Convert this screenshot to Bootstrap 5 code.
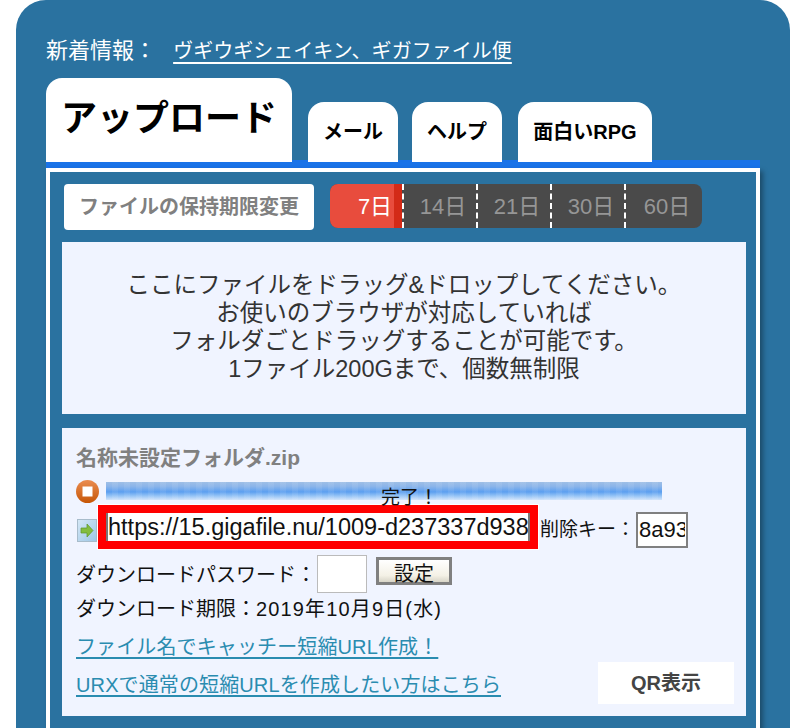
<!doctype html>
<html lang="ja"><head><meta charset="utf-8"><title>GigaFile</title>
<link href="https://cdn.jsdelivr.net/npm/bootstrap@5.3.0/dist/css/bootstrap.min.css" rel="stylesheet">
<style>
html,body{height:728px;overflow:hidden;background:#fff}
body{font-family:"Liberation Sans","Noto Sans CJK JP",sans-serif;color:#222}
.gf-panel{margin:0 14px 0 16px;background:#2a72a0;border-radius:30px 30px 0 0;padding:36px 30px 0;height:728px;overflow:hidden}
.gf-news{height:42px;color:#fff;font-size:22px;line-height:30px;white-space:nowrap}
.gf-news a{color:#fff;font-size:20px;margin-left:11px;letter-spacing:.03px;text-underline-offset:4px}
.gf-tabs{height:84px;gap:16px;position:relative;z-index:1;margin-bottom:-2px}
.gf-tab{background:#fff;color:#000;font-weight:700;border-radius:16px 16px 0 0;display:flex;align-items:center;justify-content:center;height:60px;font-size:20px;padding-bottom:1px}
.gf-tab-main{width:246px;height:84px;font-size:36px;padding-bottom:3px}
.gf-w90{width:90px}.gf-w134{width:134px}.gf-w90b{margin-left:-2px}
.gf-bar{height:8px;background:#1a73e8;width:714px}
.gf-box{width:714px;border:4px solid #fff;border-bottom:0;padding:12px 10px 0 12px;height:640px;box-shadow:3px 3px 5px rgba(0,0,0,.35)}
.gf-periodrow{margin-left:2px;gap:16px;height:58px}
.gf-change{width:250px;height:46px;background:#fff;color:#808080;border-radius:4px;font-weight:700;font-size:20px;display:flex;align-items:center;justify-content:center}
.gf-days{height:44px;width:372px;border-radius:8px;overflow:hidden;background:#4a4a4a;color:#969696;font-size:22px}
.gf-day{width:74px;display:flex;align-items:center;justify-content:center;border-left:2px dashed #fff;padding-left:6px}
.gf-day:last-child{width:78px}
.gf-day-on{width:72px;border-left:0;border-right:8px solid #d32a17;background:#e84c3d;color:#fff;padding-left:26px}
.gf-drop{background:#f0f4ff;height:172px;width:684px;font-size:23.5px;line-height:28px;color:#333;text-align:center;padding-top:29px}
.gf-file{position:relative;margin-top:14px;background:#f0f4ff;width:684px;height:288px;padding:16px 14px 0;color:#111;font-size:20px}
.gf-name{font-size:21px;font-weight:700;color:#808080;line-height:28px;height:36px}
.gf-prog{height:22px;gap:7px;position:relative}
.gf-meter{width:556px;height:18px;margin-top:2px;background:repeating-linear-gradient(90deg,rgba(255,255,255,0) 0 6px,rgba(255,255,255,.07) 6px 12px),linear-gradient(#9fbfe6,#8ab4ea 25%,#5c9ff0 55%,#8fc0f5 75%,#d3e5fb)}
.gf-done{position:absolute;left:305px;top:7px;line-height:22px;font-size:19px}
.gf-urlrow{height:52px;margin-top:1px}
.gf-urlframe{width:440px;height:44px;border:8px solid #f00;outline:1px solid #fff;background:#fff;margin:0 2px 4px 1px;display:flex;flex-shrink:0}
.gf-url{width:100%;border:0;border-left:2px solid #777;border-right:2px solid #777;outline:0;background:#fff;padding:0;font:23.5px/28px "Liberation Sans",sans-serif;color:#111;height:28px}
.gf-keylbl{white-space:nowrap;font-size:19px;margin-top:3px}
.gf-key{width:52px;height:36px;border:2px solid #808080;background:#fff;padding:0 1px;font:22px "Liberation Sans",sans-serif;color:#111;margin:2px 0 0 1px;outline:0;flex-shrink:0}
.gf-icon2{margin:3px 0 0 1px}
.gf-pwrow{height:40px;line-height:40px}
.gf-pw{width:50px;height:38px;border:1px solid #bbb;background:#fff;margin-left:1px;outline:0}
.gf-set{width:76px;height:28px;border:3px solid #808080;margin:2px 0 0 9px;padding:3px 0 0;font-size:20px;line-height:22px;color:#111;background:linear-gradient(#fff,#f4f1e6 70%,#d8d5c8)}
.gf-limit{line-height:28px;height:38px}
.gf-wide{letter-spacing:1.15px}
.gf-links{height:80px}
.gf-links a{color:#2a8cb0;display:block;font-size:20px;letter-spacing:.12px;text-underline-offset:3px}
.gf-l1{line-height:28px;height:38px}
.gf-l2{line-height:28px}
.gf-qr{position:absolute;right:12px;bottom:12px;width:136px;height:42px;background:#fff;color:#444;font-weight:700;font-size:20px;display:flex;align-items:center;justify-content:center}
</style></head><body>
<div class="gf-panel">
  <div class="gf-news">新着情報： <a href="#">ヴギウギシェイキン、ギガファイル便</a></div>
  <div class="gf-tabs d-flex align-items-end">
    <div class="gf-tab gf-tab-main">アップロード</div>
    <div class="gf-tab gf-w90">メール</div>
    <div class="gf-tab gf-w90 gf-w90b">ヘルプ</div>
    <div class="gf-tab gf-w134">面白いRPG</div>
  </div>
  <div class="gf-bar"></div>
  <div class="gf-box">
    <div class="gf-periodrow d-flex">
      <div class="gf-change">ファイルの保持期限変更</div>
      <div class="gf-days d-flex">
        <div class="gf-day gf-day-on">7日</div>
        <div class="gf-day">14日</div><div class="gf-day">21日</div><div class="gf-day">30日</div><div class="gf-day">60日</div>
      </div>
    </div>
    <div class="gf-drop">ここにファイルをドラッグ&amp;ドロップしてください。<br>お使いのブラウザが対応していれば<br>フォルダごとドラッグすることが可能です。<br>1ファイル200Gまで、個数無制限</div>
    <div class="gf-file">
      <div class="gf-name">名称未設定フォルダ.zip</div>
      <div class="gf-prog d-flex">
        <svg width="23" height="23" viewBox="0 0 23 23" class="flex-shrink-0"><defs><linearGradient id="o" x1="0" y1="0" x2="0" y2="1"><stop offset="0" stop-color="#ea8c50"/><stop offset="1" stop-color="#c65606"/></linearGradient></defs><circle cx="11.5" cy="11.5" r="11.5" fill="url(#o)"/><rect x="6.5" y="6.5" width="10" height="10" fill="#fff"/></svg>
        <div class="gf-meter"></div>
        <div class="gf-done">完了！</div>
      </div>
      <div class="gf-urlrow d-flex align-items-center">
        <svg width="20" height="23" viewBox="0 0 20 23" class="flex-shrink-0 gf-icon2"><defs><linearGradient id="b" x1="0" y1="0" x2="1" y2="1"><stop offset="0" stop-color="#d6e8f6"/><stop offset="1" stop-color="#9cc6e6"/></linearGradient></defs><rect x=".5" y=".5" width="19" height="22" fill="url(#b)" stroke="#a8bccb"/><path d="M4 9h6V5l6 6.500-6 6.500v-4H4z" fill="#83bd3e" stroke="#5d9628" stroke-width=".7"/></svg>
        <div class="gf-urlframe"><input class="gf-url" value="https://15.gigafile.nu/1009-d237337d938" readonly aria-label="URL"></div>
        <span class="gf-keylbl">削除キー：</span><input class="gf-key" value="8a93c" readonly aria-label="削除キー">
      </div>
      <div class="gf-pwrow d-flex align-items-start">
        <span>ダウンロードパスワード：</span><input class="gf-pw" aria-label="パスワード"><button class="gf-set" type="button">設定</button>
      </div>
      <div class="gf-limit">ダウンロード期限：<span class="gf-wide">2019年10月9日(水)</span></div>
      <div class="gf-links">
        <div class="gf-l1"><a href="#">ファイル名でキャッチー短縮URL作成！</a></div>
        <div class="gf-l2"><a href="#">URXで通常の短縮URLを作成したい方はこちら</a></div>
      </div>
      <div class="gf-qr">QR表示</div>
    </div>
  </div>
</div>
<script src="https://cdn.jsdelivr.net/npm/bootstrap@5.3.0/dist/js/bootstrap.bundle.min.js"></script>
</body></html>
